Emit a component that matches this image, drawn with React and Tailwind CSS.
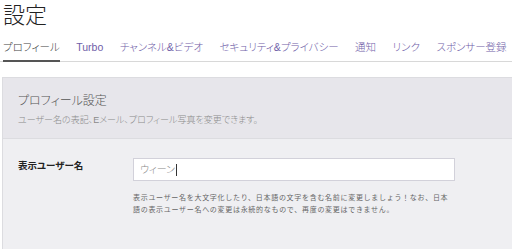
const TABS = [
  { label: 'プロフィール', active: true },
  { label: 'Turbo' },
  { label: 'チャンネル&ビデオ' },
  { label: 'セキュリティ&プライバシー' },
  { label: '通知' },
  { label: 'リンク' },
  { label: 'スポンサー登録' },
]

export default function App() {
  return (
    <div className="w-[512px] h-[249px] overflow-hidden bg-white font-['Liberation_Sans','Noto_Sans_CJK_JP',sans-serif] [font-feature-settings:'palt']">
      {/* Title */}
      <h1 className="pl-[3px] text-[22px] leading-[30px] pt-[1px] text-[#222] font-light">設定</h1>

      {/* Tabs */}
      <div className="mt-[5px] flex gap-[16.5px] border-b border-[#d8d8d8] pl-[3px] whitespace-nowrap">
        {TABS.map(t => (
          <div
            key={t.label}
            className={`text-[10.5px] leading-[22px] pb-[2px] -mb-px font-light ${t.active ? 'text-[#444] border-b-2 border-[#555]' : 'text-[#6f5ea8] border-b-2 border-transparent'}`}
          >
            {t.label}
          </div>
        ))}
      </div>

      {/* Panel */}
      <div className="mt-[15px] ml-[2px] border border-r-0 border-[#dcdce0] bg-[#efeff2]">
        <div className="bg-[#e7e6eb] border-b border-[#dcdce0] pl-[15px] pt-[14px] pb-[11px] font-light">
          <p className="text-[12px] leading-[18px] text-[#555]">プロフィール設定</p>
          <p className="mt-[3px] text-[9px] leading-[14px] text-[#8a8a8a]">ユーザー名の表記、Eメール、プロフィール写真を変更できます。</p>
        </div>

        <div className="flex pt-[19px] pb-[40px]">
          <div className="w-[130px] pl-[15px] pt-[2px] text-[9.5px] leading-[12px] font-bold text-[#222]">表示ユーザー名</div>
          <div>
            <div className="w-[322px] h-[23px] bg-white border border-[#d2d1da] flex items-center pl-[6px] text-[10px] text-[#888] font-light">
              ウィーン<span className="ml-[1px] w-px h-[12px] bg-[#333]" />
            </div>
            <div className="mt-[11px] text-[7px] leading-[12px] tracking-[0.7px] text-[#666] [font-feature-settings:normal] whitespace-nowrap">
              <p>表示ユーザー名を大文字化したり、日本語の文字を含む名前に変更しましょう！なお、日本</p>
              <p>語の表示ユーザー名への変更は永続的なもので、再度の変更はできません。</p>
            </div>
          </div>
        </div>
      </div>
    </div>
  )
}
